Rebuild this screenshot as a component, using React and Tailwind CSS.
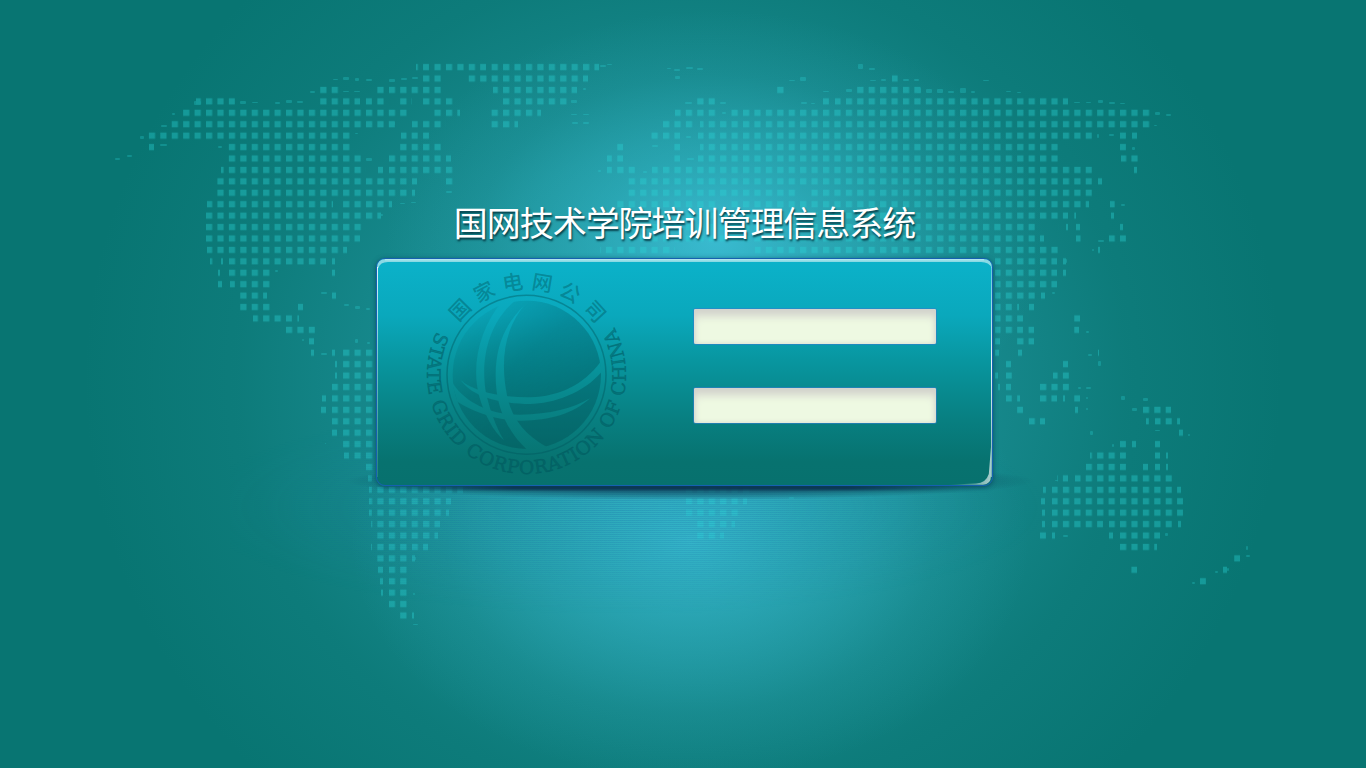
// Land cover as horizontal spans: row index on the dot grid -> [from, to] in px.
const PITCH = 11.425;
const LAND = [
  [0, [[416, 419], [423, 429], [434, 486], [491, 599]]],
  [1, [[423, 441], [468, 487], [491, 588], [892, 898]]],
  [2, [[320, 339], [377, 384], [389, 441], [493, 567], [571, 577], [777, 784], [857, 923]]],
  [3, [[196, 224], [228, 235], [320, 360], [365, 372], [377, 385], [400, 412], [423, 430], [434, 453], [503, 567], [697, 715], [823, 829], [835, 841], [846, 1068]]],
  [4, [[182, 407], [434, 460], [491, 541], [675, 720], [731, 1154]]],
  [5, [[171, 395], [412, 418], [423, 446], [491, 518], [663, 696], [700, 1151]]],
  [6, [[148, 350], [401, 418], [423, 429], [651, 680], [698, 1092], [1120, 1126], [1132, 1137]]],
  [7, [[149, 154], [228, 350], [400, 441], [617, 623], [674, 680], [700, 1058], [1120, 1126]]],
  [8, [[228, 361], [389, 441], [446, 451], [607, 612], [617, 623], [674, 680], [698, 1058], [1121, 1138]]],
  [9, [[221, 366], [378, 383], [389, 453], [607, 612], [617, 635], [652, 1092], [1134, 1137]]],
  [10, [[217, 409], [412, 417], [446, 453], [628, 1092], [1098, 1102]]],
  [11, [[217, 409], [412, 415], [628, 798], [807, 1092]]],
  [12, [[207, 333], [343, 392], [617, 720], [731, 1089], [1110, 1115]]],
  [13, [[205, 381], [628, 1068], [1074, 1076], [1111, 1114]]],
  [14, [[206, 363], [628, 1035], [1058, 1062], [1066, 1068], [1076, 1080], [1120, 1123]]],
  [15, [[206, 360], [628, 1035], [1040, 1044], [1076, 1081], [1109, 1126]]],
  [16, [[207, 347], [600, 675], [755, 1058], [1098, 1100]]],
  [17, [[210, 213], [221, 223], [229, 326], [332, 335], [995, 1057], [1063, 1066]]],
  [18, [[218, 220], [229, 270], [332, 335], [995, 1057], [1063, 1066]]],
  [19, [[218, 222], [230, 235], [240, 270], [995, 1057]]],
  [20, [[240, 267], [332, 336], [995, 1035], [1041, 1045]]],
  [21, [[240, 270], [298, 303], [995, 1012], [1017, 1019], [1029, 1034]]],
  [22, [[253, 292], [297, 299], [995, 1023], [1074, 1080]]],
  [23, [[286, 315], [995, 1023], [1028, 1034], [1074, 1079]]],
  [24, [[309, 314], [995, 1000], [1017, 1034]]],
  [25, [[311, 314], [332, 335], [343, 374], [995, 999], [1018, 1022], [1098, 1099]]],
  [26, [[335, 337], [343, 374], [1006, 1011], [1063, 1068]]],
  [27, [[335, 337], [343, 374], [995, 998], [1006, 1012], [1053, 1069]]],
  [28, [[332, 374], [998, 1000], [1006, 1011], [1040, 1069]]],
  [29, [[322, 326], [332, 374], [1006, 1012], [1017, 1020], [1040, 1057], [1063, 1065], [1074, 1080]]],
  [30, [[321, 326], [332, 374], [1017, 1023], [1075, 1078], [1143, 1171]]],
  [31, [[332, 374], [1029, 1045], [1146, 1149], [1155, 1172], [1177, 1180]]],
  [32, [[332, 337], [343, 374], [1179, 1183]]],
  [33, [[343, 374], [1120, 1126], [1132, 1136], [1155, 1160]]],
  [34, [[344, 349], [354, 374], [1090, 1094], [1097, 1126], [1155, 1160], [1166, 1168]]],
  [35, [[366, 374], [1086, 1126], [1143, 1148], [1155, 1160], [1166, 1168]]],
  [36, [[368, 372], [1057, 1068], [1075, 1172]]],
  [37, [[369, 372], [377, 463], [686, 752], [1043, 1046], [1052, 1172], [1177, 1181]]],
  [38, [[369, 451], [686, 747], [1041, 1045], [1052, 1183]]],
  [39, [[369, 372], [377, 449], [686, 743], [1042, 1045], [1052, 1183]]],
  [40, [[371, 373], [377, 440], [697, 735], [1042, 1045], [1052, 1103], [1109, 1172], [1178, 1181]]],
  [41, [[377, 438], [697, 724], [1040, 1046], [1052, 1055], [1109, 1113], [1120, 1160]]],
  [42, [[371, 372], [377, 407], [412, 428], [1120, 1157]]],
  [43, [[377, 407], [412, 415], [1234, 1240]]],
  [44, [[378, 383], [389, 407], [1131, 1137], [1223, 1227]]],
  [45, [[380, 383], [389, 407], [1200, 1206]]],
  [46, [[381, 383], [389, 407]]],
  [47, [[389, 407]]],
  [48, [[400, 407], [412, 414]]],
];

// Coastline fragments smaller than one dot: [x, y, w, h].
const BITS = [
  [115, 158, 5, 2], [127, 155, 5, 2], [140, 136, 4, 3], [160, 144, 7, 2], [161, 125, 6, 2],
  [172, 113, 3, 2], [194, 101, 7, 4], [240, 101, 6, 3], [252, 102, 6, 1], [275, 102, 5, 2],
  [286, 100, 6, 3], [297, 101, 6, 2], [310, 91, 5, 2], [333, 79, 5, 1], [343, 77, 6, 3],
  [355, 78, 4, 3], [366, 79, 6, 2], [389, 79, 6, 3], [401, 78, 6, 2], [412, 77, 6, 2],
  [343, 91, 6, 1], [354, 91, 6, 1], [367, 123, 5, 2], [378, 123, 5, 2], [389, 122, 6, 3], [355, 133, 3, 1],
  [366, 158, 6, 3], [378, 214, 5, 2], [400, 203, 5, 1], [411, 202, 5, 1], [446, 191, 6, 2], [218, 146, 4, 2],
  [571, 100, 6, 3], [571, 114, 6, 1], [583, 114, 6, 1], [572, 122, 6, 2], [583, 122, 6, 2],
  [583, 88, 3, 2], [600, 65, 6, 2], [607, 64, 5, 1], [667, 68, 4, 1], [674, 69, 6, 2],
  [686, 67, 7, 2], [697, 68, 6, 2], [675, 76, 5, 3], [685, 102, 7, 2], [720, 102, 6, 2],
  [722, 112, 4, 2], [652, 145, 6, 2], [686, 136, 5, 2], [687, 158, 7, 2], [598, 170, 3, 2],
  [643, 171, 4, 2], [858, 64, 5, 5], [869, 68, 6, 2], [789, 80, 6, 1], [800, 77, 6, 4],
  [870, 80, 6, 1], [881, 79, 5, 2], [903, 79, 6, 2], [914, 79, 5, 2], [983, 80, 6, 1],
  [823, 91, 6, 1], [846, 89, 6, 3], [917, 88, 4, 5], [926, 89, 6, 4], [937, 89, 6, 4],
  [948, 91, 6, 2], [960, 88, 6, 5], [971, 91, 4, 2], [1006, 91, 5, 1], [1017, 92, 4, 1],
  [801, 102, 6, 2], [811, 103, 4, 1], [1074, 102, 6, 1], [1086, 102, 5, 1], [1098, 100, 5, 3],
  [1109, 102, 6, 2], [1120, 103, 5, 1], [1155, 112, 5, 3], [1166, 114, 5, 2], [1154, 125, 3, 1],
  [1109, 134, 5, 2], [1132, 147, 3, 3], [1097, 134, 2, 4], [1121, 204, 4, 2], [1098, 240, 6, 2],
  [1092, 249, 2, 2], [1063, 259, 4, 4], [275, 270, 3, 2], [309, 260, 5, 2], [321, 292, 6, 2],
  [344, 304, 5, 2], [355, 306, 5, 3], [366, 308, 4, 2], [302, 339, 2, 2], [355, 339, 3, 4],
  [367, 342, 3, 2], [321, 353, 6, 2], [1052, 292, 3, 2], [1086, 331, 3, 2], [1088, 354, 4, 2],
  [1098, 361, 3, 5], [1078, 387, 3, 2], [1086, 387, 5, 2], [1121, 396, 4, 4], [1143, 398, 5, 3],
  [1086, 397, 2, 2], [1086, 408, 2, 2], [1132, 408, 5, 3], [1090, 431, 3, 4], [1155, 430, 5, 1],
  [1188, 434, 2, 2], [1112, 444, 2, 3], [1055, 480, 3, 1], [1063, 535, 5, 2], [1165, 533, 3, 3],
  [789, 497, 5, 2], [413, 557, 3, 3], [413, 593, 2, 2], [413, 624, 5, 1], [1215, 571, 3, 2],
  [1227, 568, 2, 3], [1246, 546, 2, 4], [1246, 555, 4, 2], [1192, 582, 3, 2], [325, 443, 1, 1],
];

function WorldMap() {
  return (
    <svg className="absolute inset-0 h-full w-full" viewBox="0 0 1366 768" aria-hidden="true">
      <defs>
        <pattern id="dots" patternUnits="userSpaceOnUse" x="114.6" y="61.3" width={PITCH} height={PITCH}>
          <rect x="0" y="2.7" width="6.2" height="6.2" fill="#fff" />
        </pattern>
        <mask id="land" maskUnits="userSpaceOnUse" x="0" y="0" width="1366" height="768">
          {LAND.map(([row, spans]) =>
            spans.map(([a, b]) => (
              <rect key={row + "-" + a} x={a} y={62.3 + row * PITCH} width={b - a} height="9.4" fill="url(#dots)" />
            ))
          )}
          {BITS.map(([x, y, w, h]) => (
            <rect key={x + "-" + y} x={x} y={y} width={w} height={h} rx="1" fill="#fff" opacity="0.75" />
          ))}
        </mask>
      </defs>
      <rect width="1366" height="768" fill="#2bd6d8" opacity="0.37" mask="url(#land)" />
    </svg>
  );
}

const RING = [
  ["国", -46],
  ["家", -27.3],
  ["电", -8.7],
  ["网", 9.7],
  ["公", 28],
  ["司", 47.5],
];

function Emblem() {
  return (
    <svg className="h-[224px] w-[224px] overflow-visible" viewBox="415 260 224 224" role="img" aria-label="国家电网公司">
      <defs>
        <linearGradient id="globe" x1="0.15" y1="0.1" x2="0.65" y2="0.7">
          <stop offset="0" stopColor="#00484f" stopOpacity="0.06" />
          <stop offset="0.55" stopColor="#00484f" stopOpacity="0.28" />
          <stop offset="1" stopColor="#00484f" stopOpacity="0.34" />
        </linearGradient>
        <mask id="bands" maskUnits="userSpaceOnUse" x="0" y="0" width="520" height="520">
          <rect width="520" height="520" fill="#fff" />
          <g fill="#000">
            <path d="M185 50C120 130 92 240 118 335C132 385 160 440 192 466C164 420 149 370 138 325C122 230 140 120 225 47Z" />
            <path d="M252 62C180 130 158 220 170 320C180 395 220 460 268 500L322 487C255 450 215 400 202 335C182 240 188 140 252 62Z" />
            <path d="M62 285C100 320 190 338 270 337C360 333 430 300 482 230L484 262C430 325 340 356 270 357C190 356 100 340 62 285Z" />
            <path d="M34 288C70 350 150 390 240 389C330 388 400 370 450 340C400 388 320 409 235 407C160 403 100 380 52 350Z" />
          </g>
        </mask>
        <path id="orbit" d="M436.9 331.5A99.4 99.4 0 1 0 616.1 331.5" />
      </defs>
      <circle cx="526.5" cy="374.7" r="79.5" fill="none" stroke="#00555c" strokeOpacity="0.42" strokeWidth="1.5" />
      <g transform="translate(440 285) scale(.3333)">
        <ellipse cx="260.5" cy="269.5" rx="222.5" ry="222.5" fill="url(#globe)" mask="url(#bands)" />
      </g>
      <g fill="#00555c" fillOpacity="0.42">
        <g fontFamily="'Noto Sans CJK SC', sans-serif" fontSize="20.5" fontWeight="500" textAnchor="middle">
          {RING.map(([ch, deg]) => (
            <text key={ch} x="526.7" y="289" transform={"rotate(" + deg + " 526.7 374.3)"}>
              {ch}
            </text>
          ))}
        </g>
        <text
          fontFamily="'DejaVu Serif', serif"
          fontSize="18.6"
          stroke="#00555c"
          strokeOpacity="0.36"
          strokeWidth="0.8"
          textLength="405"
        >
          <textPath href="#orbit" textLength="405">STATE GRID CORPORATION OF CHINA</textPath>
        </text>
      </g>
    </svg>
  );
}

function Field({ type, label }) {
  return (
    <input
      type={type}
      aria-label={label}
      className="block h-[35px] w-[242px] rounded-[2px] bg-[#eef9e2] px-2 text-sm outline-none shadow-[0_0_0_1px_rgba(50,125,205,0.6),inset_0_8px_8px_-1px_#d2d2cc,inset_0_0_5px_#d4d8cc]"
    />
  );
}

function LoginPanel() {
  return (
    <form className="relative flex h-[228px] w-[617px] items-start rounded-[9px] border border-[#1560b0] bg-[linear-gradient(to_bottom,#0bb2ca_0%,#0aa8bc_25%,#08959e_46%,#088082_70%,#07726f_90%,#07716e_100%)] shadow-[0_1px_5px_rgba(5,60,90,0.7)]">
      <div className="pl-[38px] pt-px">
        <Emblem />
      </div>
      <div className="flex flex-col gap-[44px] pl-[55px] pt-[50px]">
        <Field type="text" label="用户名" />
        <Field type="password" label="密码" />
      </div>
      <svg className="pointer-events-none absolute inset-0" width="615" height="226" viewBox="0 0 615 226" aria-hidden="true">
        <defs>
          <linearGradient id="fadeDown" x1="0" y1="0" x2="0" y2="1">
            <stop offset="0" stopColor="#fff" stopOpacity="0.85" />
            <stop offset="0.35" stopColor="#fff" stopOpacity="0.5" />
            <stop offset="1" stopColor="#fff" stopOpacity="0.12" />
          </linearGradient>
          <linearGradient id="rightEdge" x1="0" y1="0" x2="0" y2="1">
            <stop offset="0" stopColor="#fff" stopOpacity="0.35" />
            <stop offset="0.45" stopColor="#fff" stopOpacity="0.9" />
            <stop offset="1" stopColor="#fff" stopOpacity="0.45" />
          </linearGradient>
          <linearGradient id="bottomEdge" x1="0" y1="0" x2="1" y2="0">
            <stop offset="0" stopColor="#fff" stopOpacity="0" />
            <stop offset="1" stopColor="#fff" stopOpacity="0.65" />
          </linearGradient>
        </defs>
        <path d="M0 9Q0 0 9 0H606Q615 0 615 9Q612 3.2 604 3H11Q3 3.2 1.4 9Z" fill="#d8f2f6" fillOpacity="0.62" />
        <path d="M8 0.8H607" stroke="#fff" strokeOpacity="0.45" strokeWidth="1" />
        <rect x="0" y="8" width="1" height="210" fill="url(#fadeDown)" />
        <rect x="614" y="8" width="1" height="210" fill="url(#rightEdge)" />
        <path d="M570 225.8L599 224.6Q609 224 611.8 215L614 188V217Q613.8 225.4 606 225.8Z" fill="url(#bottomEdge)" />
      </svg>
    </form>
  );
}

export default function App() {
  return (
    <main className="relative h-[768px] w-full overflow-hidden bg-[#087572] bg-[radial-gradient(ellipse_330px_230px_at_715px_240px,rgba(72,208,236,0.66)_0%,rgba(66,205,228,0.38)_35%,rgba(60,190,210,0.12)_72%,rgba(60,190,210,0)_100%),radial-gradient(ellipse_340px_240px_at_690px_540px,rgba(66,200,228,0.62)_0%,rgba(62,195,220,0.4)_35%,rgba(60,190,210,0.13)_72%,rgba(60,190,210,0)_100%),radial-gradient(ellipse_600px_560px_at_683px_380px,rgba(46,168,188,0.64)_0%,rgba(46,168,184,0.46)_42%,rgba(40,155,165,0.17)_74%,rgba(40,150,160,0)_100%)]">
      <WorldMap />
      <div className="absolute left-[230px] top-[400px] h-[215px] w-[850px] bg-[repeating-linear-gradient(to_bottom,rgba(30,120,180,0.26)_0px,rgba(30,120,180,0.26)_1px,rgba(70,200,225,0.08)_1px,rgba(70,200,225,0.08)_2px)] [mask-image:radial-gradient(ellipse_50%_50%_at_46%_50%,#000_0%,rgba(0,0,0,0.7)_40%,transparent_100%)]" />
      <div className="absolute left-[345px] top-[462px] h-[38px] w-[690px] bg-[radial-gradient(ellipse_50%_50%_at_50%_50%,rgba(10,52,80,0.7)_0%,rgba(10,55,80,0.55)_60%,rgba(8,65,80,0.28)_82%,transparent_100%)]" />
      <div className="absolute left-[400px] top-[485px] h-[5px] w-[560px] bg-[linear-gradient(to_right,transparent,rgba(14,42,70,0.75)_20%,rgba(14,42,70,0.75)_80%,transparent)] blur-[1px]" />
      <div className="relative flex flex-col items-center pl-[3px] pt-[197px]">
        <h1 className="h-[61px] whitespace-nowrap font-['Noto_Sans_CJK_SC',sans-serif] text-[34px] font-normal leading-[50px] tracking-[-1.05px] text-white [text-shadow:1px_2px_2px_rgba(0,45,55,0.85)]">
          国网技术学院培训管理信息系统
        </h1>
        <LoginPanel />
      </div>
    </main>
  );
}
